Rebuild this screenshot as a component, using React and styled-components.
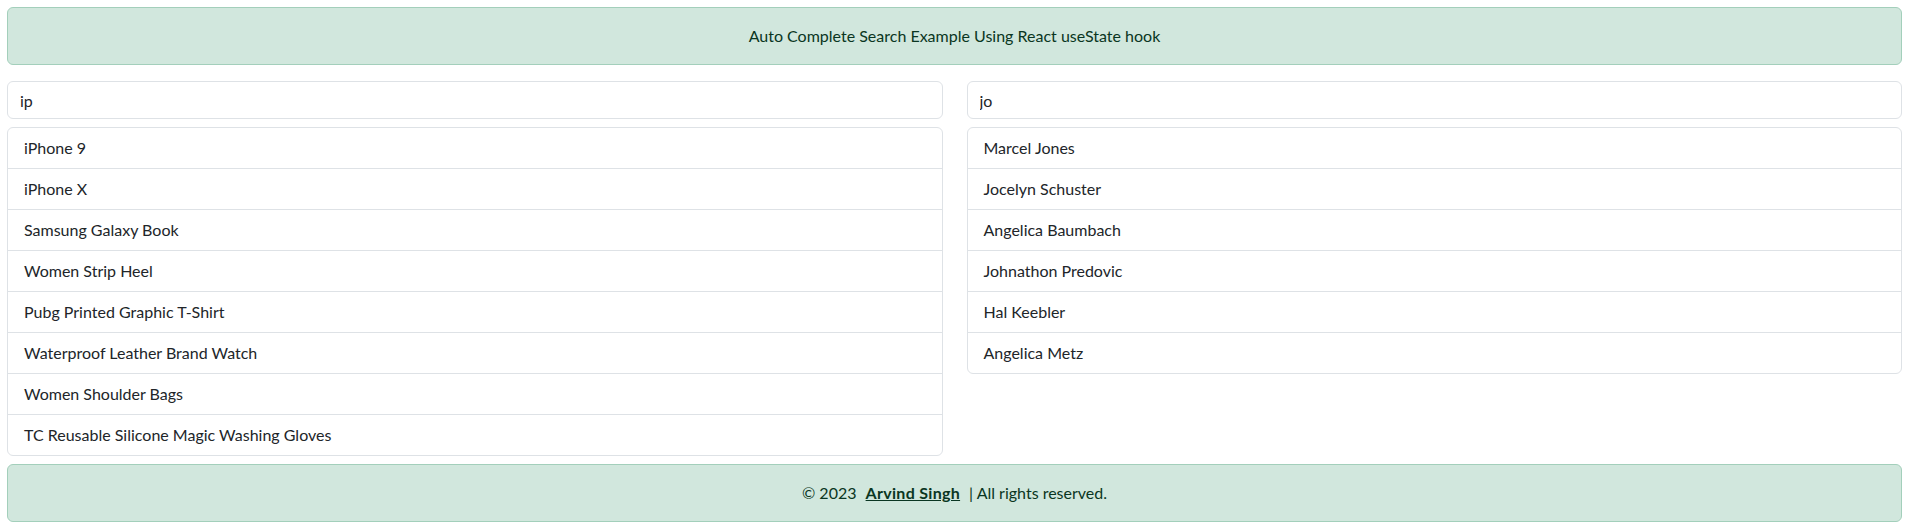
import React, { useState } from 'react';
import styled, { createGlobalStyle } from 'styled-components';

const products = [
  'iPhone 9',
  'iPhone X',
  'Samsung Galaxy Book',
  'Women Strip Heel',
  'Pubg Printed Graphic T-Shirt',
  'Waterproof Leather Brand Watch',
  'Women Shoulder Bags',
  'TC Reusable Silicone Magic Washing Gloves',
];

const users = [
  'Marcel Jones',
  'Jocelyn Schuster',
  'Angelica Baumbach',
  'Johnathon Predovic',
  'Hal Keebler',
  'Angelica Metz',
];

const GlobalStyle = createGlobalStyle`
  * { box-sizing: border-box; }
  body {
    margin: 0;
    background: #fff;
    color: #212529;
    font-family: Lato, "Open Sans", sans-serif;
    font-size: 16px;
    line-height: 1.5;
  }
`;

const Page = styled.div`
  padding: 7px 7px 0;
  display: flex;
  flex-direction: column;
`;

const Alert = styled.div`
  background: #d1e7dd;
  border: 1px solid #a3cfbb;
  border-radius: 6px;
  color: #0a3622;
  padding: 16px;
  text-align: center;
  line-height: 24px;
`;

const Columns = styled.div`
  display: grid;
  grid-template-columns: 1fr 1fr;
  column-gap: 24px;
  align-items: start;
  margin: 16px 0 8px;
`;

const Column = styled.div`
  display: flex;
  flex-direction: column;
  gap: 8px;
`;

const SearchInput = styled.input`
  display: block;
  width: 100%;
  height: 38px;
  padding: 6px 12px;
  font: inherit;
  line-height: 24px;
  color: #212529;
  background: #fff;
  border: 1px solid #dee2e6;
  border-radius: 6px;
  outline: none;
`;

const List = styled.ul`
  list-style: none;
  margin: 0;
  padding: 0;
  border: 1px solid #dee2e6;
  border-radius: 6px;
  overflow: hidden;
`;

const Item = styled.li`
  padding: 8px 16px;
  line-height: 24px;
  border-top: 1px solid #dee2e6;
  &:first-child { border-top: none; }
`;

const Author = styled.a`
  color: #0a3622;
  font-weight: 700;
  text-decoration: underline;
  letter-spacing: 0.3px;
  margin: 0 9px 0 5px;
`;

const Search = ({ value, items }) => {
  const [query, setQuery] = useState(value);
  return (
    <Column>
      <SearchInput value={query} onChange={e => setQuery(e.target.value)} />
      <List>
        {items.map(i => <Item key={i}>{i}</Item>)}
      </List>
    </Column>
  );
};

export default function App() {
  return (
    <Page>
      <GlobalStyle />
      <Alert>Auto Complete Search Example Using React useState hook</Alert>
      <Columns>
        <Search value="ip" items={products} />
        <Search value="jo" items={users} />
      </Columns>
      <Alert>
        © 2023 <Author href="#">Arvind Singh</Author>| All rights reserved.
      </Alert>
    </Page>
  );
}
